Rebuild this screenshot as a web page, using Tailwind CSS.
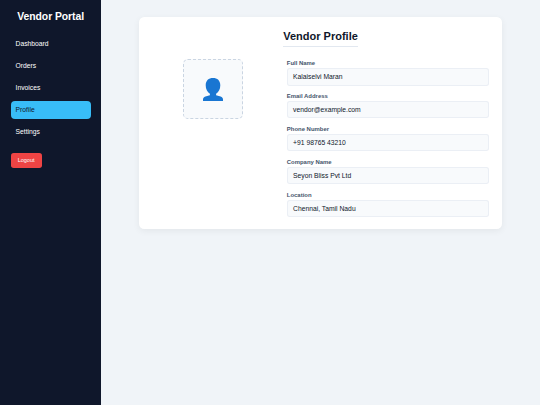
<!DOCTYPE html>
<html lang="en">
<head>
    <meta charset="UTF-8">
    <meta name="viewport" content="width=device-width, initial-scale=1.0">
    <title>Vendor Profile</title>
    <script src="https://cdn.jsdelivr.net/npm/@tailwindcss/browser@4"></script>
</head>
<body class="flex h-screen overflow-hidden bg-[#f0f4f8] font-['Liberation_Sans',Arial,sans-serif] text-[6.75px] text-slate-900">
    <!-- Sidebar -->
    <aside class="w-[101.3px] shrink-0 bg-slate-900 px-[10.6px] pt-[11px] text-white">
        <h2 class="mb-[12px] text-center text-[10.4px] leading-[12px] font-bold tracking-[-0.06px]">Vendor Portal</h2>
        <nav class="flex flex-col gap-[4.4px] leading-[17.6px]">
            <a href="#" class="rounded-[4px] px-[5px]">Dashboard</a>
            <a href="#" class="rounded-[4px] px-[5px]">Orders</a>
            <a href="#" class="rounded-[4px] px-[5px]">Invoices</a>
            <a href="#" class="rounded-[4px] bg-[#38bdf8] px-[5px] text-slate-900">Profile</a>
            <a href="#" class="rounded-[4px] px-[5px]">Settings</a>
        </nav>
        <button class="mt-[12.5px] block h-[15px] w-[31px] rounded-[2.7px] bg-[#ef4444] text-center text-[5.5px] leading-[15px]">Logout</button>
    </aside>

    <!-- Profile card -->
    <main class="flex-1 pt-[16.8px] pl-[37.5px]">
        <div class="h-[212.2px] w-[363.5px] rounded-[5.3px] bg-white px-[13px] pt-[12.5px] shadow-[0_2px_7px_rgba(0,0,0,0.06)]">
            <h1 class="mx-auto h-[17.5px] w-fit border-b border-slate-200 pt-[0.8px] text-[11px] leading-[13px] font-bold">Vendor Profile</h1>
            <div class="flex">
                <div class="w-[135px] shrink-0 pt-[12.7px] pl-[31.5px]">
                    <div class="flex size-[59.5px] items-center justify-center rounded-[5px] border border-dashed border-slate-300 bg-slate-50">
                        <svg class="h-[23px] w-[20px]" viewBox="0 0 20 23" fill="#1976d2">
                            <path d="M10 0C5.6 0 2.7 2.6 2.7 7.2c0 3.8 1.6 7 4.2 8.5v1.5L2.4 18.6C.8 19.1 0 20.2 0 21.6V23h20v-1.4c0-1.4-.8-2.5-2.4-3l-4.5-1.4v-1.5c2.6-1.5 4.2-4.7 4.2-8.5C17.3 2.6 14.4 0 10 0Z"/>
                        </svg>
                    </div>
                </div>
                <div class="flex flex-1 flex-col gap-[6px] pt-[11.9px]">
                    <div>
                        <label class="mb-[1px] block pt-[0.4px] text-[5.95px] leading-[8px] font-bold text-slate-600">Full Name</label>
                        <div class="h-[17.5px] rounded-[2.7px] border border-slate-200/60 bg-slate-50 px-[5.3px] leading-[15.4px]">Kalaiselvi Maran</div>
                    </div>
                    <div>
                        <label class="mb-[1px] block pt-[0.4px] text-[5.95px] leading-[8px] font-bold text-slate-600">Email Address</label>
                        <div class="h-[17.5px] rounded-[2.7px] border border-slate-200/60 bg-slate-50 px-[5.3px] leading-[15.4px]">vendor@example.com</div>
                    </div>
                    <div>
                        <label class="mb-[1px] block pt-[0.4px] text-[5.95px] leading-[8px] font-bold text-slate-600">Phone Number</label>
                        <div class="h-[17.5px] rounded-[2.7px] border border-slate-200/60 bg-slate-50 px-[5.3px] leading-[15.4px]">+91 98765 43210</div>
                    </div>
                    <div>
                        <label class="mb-[1px] block pt-[0.4px] text-[5.95px] leading-[8px] font-bold text-slate-600">Company Name</label>
                        <div class="h-[17.5px] rounded-[2.7px] border border-slate-200/60 bg-slate-50 px-[5.3px] leading-[15.4px]">Seyon Bliss Pvt Ltd</div>
                    </div>
                    <div>
                        <label class="mb-[1px] block pt-[0.4px] text-[5.95px] leading-[8px] font-bold text-slate-600">Location</label>
                        <div class="h-[17.5px] rounded-[2.7px] border border-slate-200/60 bg-slate-50 px-[5.3px] leading-[15.4px]">Chennai, Tamil Nadu</div>
                    </div>
                </div>
            </div>
        </div>
    </main>
</body>
</html>
